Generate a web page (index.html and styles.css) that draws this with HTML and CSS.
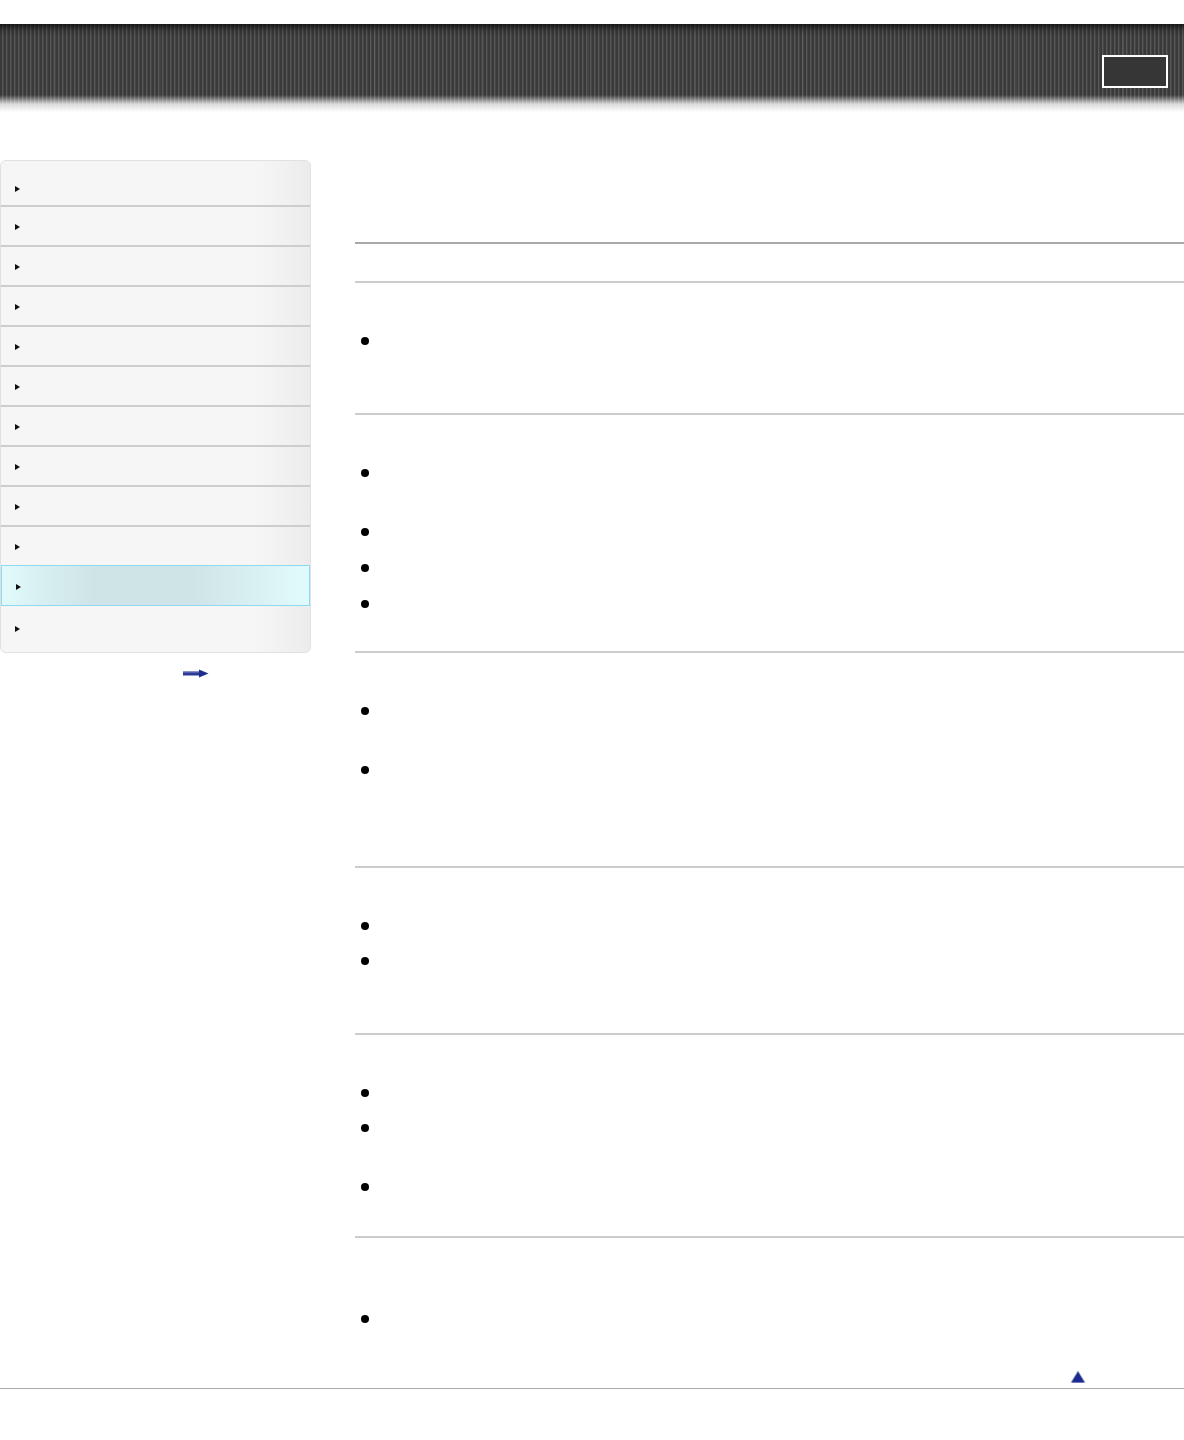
FILE: index.html
```html
<!DOCTYPE html>
<html lang="en">
<head>
<meta charset="utf-8">
<title>Help Guide</title>
<link rel="stylesheet" href="styles.css">
</head>
<body>
<header class="masthead">
  <div class="masthead-btn"></div>
</header>

<div class="layout">
  <aside class="side">
    <nav class="menu">
      <div class="menu-row first"><span class="tri"></span></div>
      <div class="menu-row"><span class="tri"></span></div>
      <div class="menu-row"><span class="tri"></span></div>
      <div class="menu-row"><span class="tri"></span></div>
      <div class="menu-row"><span class="tri"></span></div>
      <div class="menu-row"><span class="tri"></span></div>
      <div class="menu-row"><span class="tri"></span></div>
      <div class="menu-row"><span class="tri"></span></div>
      <div class="menu-row"><span class="tri"></span></div>
      <div class="menu-row pre-active"><span class="tri"></span></div>
      <div class="menu-row active"><span class="tri"></span></div>
      <div class="menu-row last"><span class="tri"></span></div>
    </nav>
    <div class="more-link">
      <svg width="26" height="9" viewBox="0 0 26 9">
        <rect x="0" y="2.5" width="18" height="4" fill="#2b3a98"/>
        <rect x="0" y="2.5" width="18" height="1" fill="#7f89c4"/>
        <polygon points="16,0.5 25.5,4.5 16,8.5" fill="#1f2d8e"/>
      </svg>
    </div>
  </aside>

  <main class="content">
    <div class="title-area"></div>
    <div class="intro"></div>

    <section class="sec">
      <div class="sec-head"></div>
      <ul class="bullets">
        <li class="h83"></li>
      </ul>
    </section>

    <section class="sec">
      <div class="sec-head"></div>
      <ul class="bullets">
        <li class="h59"></li>
        <li class="h36"></li>
        <li class="h36"></li>
        <li class="h58"></li>
      </ul>
    </section>

    <section class="sec">
      <div class="sec-head"></div>
      <ul class="bullets">
        <li class="h59"></li>
        <li class="h107"></li>
      </ul>
    </section>

    <section class="sec">
      <div class="sec-head"></div>
      <ul class="bullets">
        <li class="h35"></li>
        <li class="h83"></li>
      </ul>
    </section>

    <section class="sec">
      <div class="sec-head"></div>
      <ul class="bullets">
        <li class="h35"></li>
        <li class="h59"></li>
        <li class="h60"></li>
      </ul>
    </section>

    <section class="sec">
      <div class="sec-head tall"></div>
      <ul class="bullets">
        <li class="h52"></li>
      </ul>
    </section>
  </main>
</div>

<div class="page-top">
  <svg width="16" height="13" viewBox="0 0 16 13">
    <polygon points="8,0.5 15.5,12.5 0.5,12.5" fill="#8a93c8"/>
    <polygon points="8,2 14.3,12.5 1.7,12.5" fill="#1b2a8f"/>
  </svg>
</div>
<footer class="foot"></footer>
</body>
</html>
```

FILE: styles.css
```css
* { box-sizing: border-box; }

html, body {
  margin: 0;
  padding: 0;
  background: #fff;
  font-family: "Liberation Sans", Arial, sans-serif;
  color: #000;
}

body {
  width: 1184px;
  min-height: 1440px;
}

/* ---------- header ---------- */
.masthead {
  margin-top: 24px;
  height: 88px;
  display: flex;
  justify-content: flex-end;
  align-items: flex-start;
  padding: 31px 16px 0 0;
  background:
    linear-gradient(to bottom,
      rgba(10,10,10,0.75) 0px,
      rgba(20,20,20,0.25) 6px,
      rgba(0,0,0,0) 12px,
      rgba(0,0,0,0) 71px,
      rgba(255,255,255,0.35) 75px,
      rgba(255,255,255,0.8) 80px,
      #ffffff 88px),
    repeating-linear-gradient(to right,
      rgba(255,255,255,0) 0px,
      rgba(255,255,255,0) 53px,
      rgba(255,255,255,0.06) 53px,
      rgba(255,255,255,0.06) 54px,
      rgba(255,255,255,0) 54px,
      rgba(255,255,255,0) 107px),
    repeating-linear-gradient(to right,
      #393939 0px,
      #393939 2px,
      #595959 2px,
      #595959 3px,
      #454545 3px,
      #454545 4px);
}

.masthead-btn {
  width: 66px;
  height: 33px;
  border: 2px solid #ffffff;
  background: #363636;
}

/* ---------- layout ---------- */
.layout {
  margin-top: 48px;
  display: grid;
  grid-template-columns: 310px 829px;
  column-gap: 45px;
  align-items: start;
}

/* ---------- sidebar ---------- */
.menu {
  width: 311px;
  border: 1px solid #e1e1e1;
  border-radius: 6px;
  overflow: hidden;
  background: linear-gradient(to right, #f6f6f6 0, #f6f6f6 82%, #ececec 100%);
}

.menu-row {
  height: 40px;
  border-bottom: 2px solid #cdcdcd;
  display: flex;
  align-items: center;
  padding: 2px 0 0 14px;
}

.menu-row.first {
  height: 46px;
  padding-top: 12px;
}

.menu-row.pre-active {
  border-bottom: 1px solid #8fd8f2;
  height: 39px;
}

.menu-row.active {
  height: 40px;
  border: 1px solid #8fd8f2;
  border-top: none;
  background: linear-gradient(to right,
    #e1fbfd 0%, #d8f0f2 12%, #cfe4e7 30%, #cfe4e7 62%, #d8eff1 80%, #e1fbfd 100%);
}

.menu-row.last {
  height: 46px;
  border-bottom: none;
  padding-top: 0;
}

.tri {
  width: 0;
  height: 0;
  border-top: 3px solid transparent;
  border-bottom: 3px solid transparent;
  border-left: 5px solid #111;
}

.more-link {
  padding: 16px 0 0 183px;
  line-height: 0;
}

/* ---------- main ---------- */
.content {
  display: flex;
  flex-direction: column;
}

.title-area {
  height: 84px;
  border-bottom: 2px solid #a9a9a9;
}

.intro {
  height: 37px;
}

.sec {
  border-top: 2px solid #cccccc;
}

.sec-head {
  height: 47px;
}

.sec-head.tall {
  height: 70px;
}

.bullets {
  list-style: none;
  margin: 0;
  padding: 0;
}

.bullets li {
  position: relative;
}

.bullets li::before {
  content: "";
  position: absolute;
  left: 6px;
  top: 7px;
  width: 8px;
  height: 8px;
  border-radius: 50%;
  background: #000;
}

.h35 { height: 35px; }
.h36 { height: 36px; }
.h52 { height: 52px; }
.h58 { height: 58px; }
.h59 { height: 59px; }
.h60 { height: 60px; }
.h83 { height: 83px; }
.h107 { height: 107px; }

/* ---------- footer ---------- */
.page-top {
  display: flex;
  justify-content: flex-end;
  padding: 10px 98px 0 0;
  height: 28px;
  line-height: 0;
}

.foot {
  border-top: 1px solid #aaaaaa;
  height: 49px;
}
```
